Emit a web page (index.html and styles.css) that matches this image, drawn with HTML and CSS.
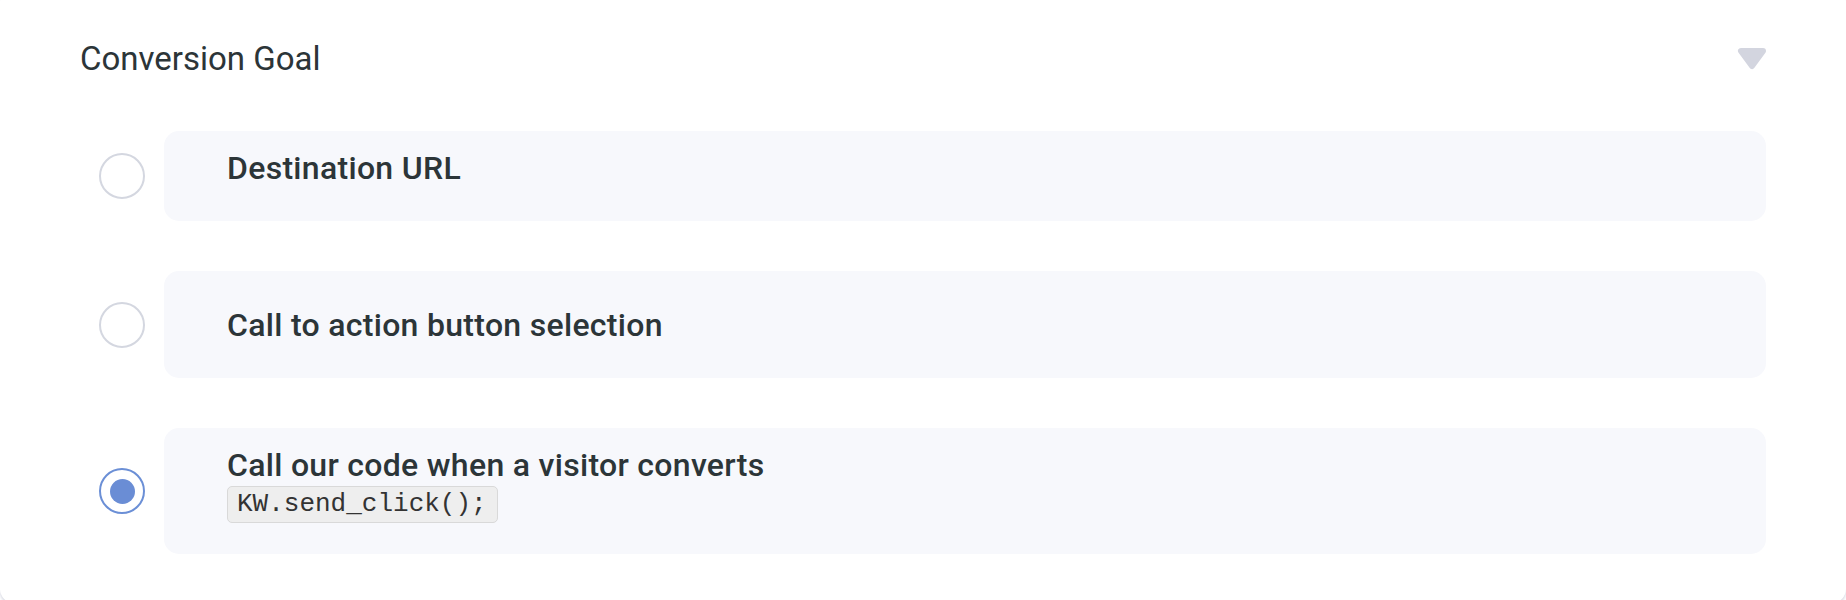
FILE: index.html
```html
<!DOCTYPE html>
<html lang="en">
<head>
<meta charset="utf-8">
<title>Conversion Goal</title>
<link rel="stylesheet" href="styles.css">
</head>
<body>
<section class="card">
  <header class="card-head">
    <h2 class="card-title">Conversion Goal</h2>
    <svg class="caret" width="30" height="24" viewBox="0 0 30 24" aria-hidden="true">
      <polygon points="4,4 26,4 15,19" fill="#d3d5df" stroke="#d3d5df" stroke-width="6" stroke-linejoin="round"/>
    </svg>
  </header>
  <div class="options">
    <label class="option">
      <span class="radio"></span>
      <span class="option-box box-url">
        <span class="option-label">Destination URL</span>
      </span>
    </label>
    <label class="option">
      <span class="radio"></span>
      <span class="option-box box-cta">
        <span class="option-label">Call to action button selection</span>
      </span>
    </label>
    <label class="option">
      <span class="radio radio-checked"><span class="radio-dot"></span></span>
      <span class="option-box box-code">
        <span class="option-label">Call our code when a visitor converts</span>
        <code class="snippet">KW.send_click();</code>
      </span>
    </label>
  </div>
</section>
</body>
</html>
```
FILE: styles.css
```css
html, body {
  margin: 0;
  padding: 0;
  background: #ffffff;
}
body {
  font-family: Roboto, "Liberation Sans", Arial, sans-serif;
  color: #2c3538;
  overflow: hidden;
  height: 600px;
}
.card {
  box-sizing: border-box;
  width: 100%;
  height: 615px;
  margin-top: -12px;
  border-radius: 14px;
  background: #ffffff;
  box-shadow: 0 2px 3px rgba(60, 70, 120, 0.22);
  padding: 0 80px;
}
.card-head {
  display: flex;
  align-items: center;
  justify-content: space-between;
  padding-top: 53px;
  height: 36px;
  margin-bottom: 54px;
}
.card-title {
  margin: 0;
  font-size: 33px;
  line-height: 36px;
  font-weight: 400;
  color: #2c3538;
}
.caret {
  display: block;
  margin-right: -1px;
}
.options {
  display: flex;
  flex-direction: column;
  gap: 50px;
}
.option {
  display: flex;
  align-items: center;
  gap: 19px;
  padding-left: 19px;
}
.radio {
  box-sizing: border-box;
  flex: none;
  width: 46px;
  height: 46px;
  border-radius: 50%;
  border: 2px solid #d4d7e0;
  background: #fff;
  display: flex;
  align-items: center;
  justify-content: center;
}
.radio-checked {
  border-color: #6b8fd6;
}
.radio-dot {
  width: 25px;
  height: 25px;
  border-radius: 50%;
  background: #6a8dd5;
}
.option-box {
  flex: 1;
  display: flex;
  flex-direction: column;
  align-items: flex-start;
  background: #f7f8fc;
  border-radius: 15px;
  padding-left: 63px;
}
.box-url {
  padding-top: 21px;
  padding-bottom: 37px;
}
.box-cta {
  padding-top: 38px;
  padding-bottom: 37px;
}
.box-code {
  padding-top: 21px;
  padding-bottom: 31px;
}
.option-label {
  font-size: 32px;
  line-height: 32px;
  font-weight: 500;
  letter-spacing: 0.3px;
  color: #2c3538;
}
.snippet {
  margin-top: 5px;
  box-sizing: border-box;
  height: 37px;
  padding: 0 10px 0 9px;
  font-family: "Liberation Mono", "Courier New", monospace;
  font-size: 26px;
  line-height: 35px;
  color: #333333;
  background: #eeeeee;
  border: 1px solid #d9d9d9;
  border-radius: 5px;
}
```
